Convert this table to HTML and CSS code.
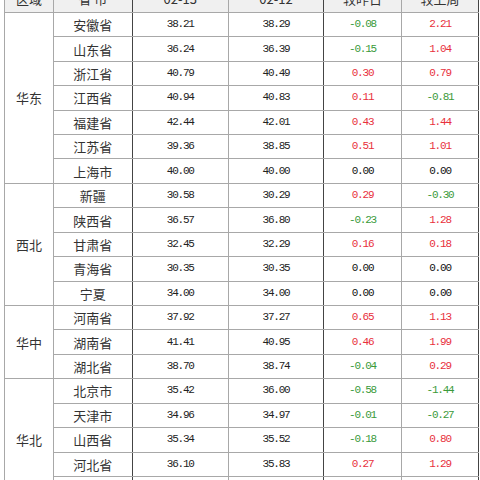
FILE: index.html
```html
<!DOCTYPE html>
<html lang="zh">
<head>
<meta charset="utf-8">
<link rel="stylesheet" href="styles.css">
</head>
<body>
<table class="price">
<colgroup>
<col class="c1"><col class="c2"><col class="c3"><col class="c4"><col class="c5"><col class="c6">
</colgroup>
<thead>
<tr><th>区域</th><th class="dk">省 市</th><th>02-13</th><th class="dk">02-12</th><th>较昨日</th><th class="dk">较上周</th></tr>
</thead>
<tbody>
<tr class="grp"><td class="area" rowspan="7">华东</td><td class="dk">安徽省</td><td class="n">38.21</td><td class="n dk">38.29</td><td class="n g">-0.08</td><td class="n r dk">2.21</td></tr>
<tr><td class="dk">山东省</td><td class="n">36.24</td><td class="n dk">36.39</td><td class="n g">-0.15</td><td class="n r dk">1.04</td></tr>
<tr><td class="dk">浙江省</td><td class="n">40.79</td><td class="n dk">40.49</td><td class="n r">0.30</td><td class="n r dk">0.79</td></tr>
<tr><td class="dk">江西省</td><td class="n">40.94</td><td class="n dk">40.83</td><td class="n r">0.11</td><td class="n g dk">-0.81</td></tr>
<tr><td class="dk">福建省</td><td class="n">42.44</td><td class="n dk">42.01</td><td class="n r">0.43</td><td class="n r dk">1.44</td></tr>
<tr><td class="dk">江苏省</td><td class="n">39.36</td><td class="n dk">38.85</td><td class="n r">0.51</td><td class="n r dk">1.01</td></tr>
<tr><td class="dk">上海市</td><td class="n">40.00</td><td class="n dk">40.00</td><td class="n z">0.00</td><td class="n z dk">0.00</td></tr>
<tr class="grp"><td class="area" rowspan="5">西北</td><td class="dk">新疆</td><td class="n">30.58</td><td class="n dk">30.29</td><td class="n r">0.29</td><td class="n g dk">-0.30</td></tr>
<tr><td class="dk">陕西省</td><td class="n">36.57</td><td class="n dk">36.80</td><td class="n g">-0.23</td><td class="n r dk">1.28</td></tr>
<tr><td class="dk">甘肃省</td><td class="n">32.45</td><td class="n dk">32.29</td><td class="n r">0.16</td><td class="n r dk">0.18</td></tr>
<tr><td class="dk">青海省</td><td class="n">30.35</td><td class="n dk">30.35</td><td class="n z">0.00</td><td class="n z dk">0.00</td></tr>
<tr><td class="dk">宁夏</td><td class="n">34.00</td><td class="n dk">34.00</td><td class="n z">0.00</td><td class="n z dk">0.00</td></tr>
<tr class="grp"><td class="area" rowspan="3">华中</td><td class="dk">河南省</td><td class="n">37.92</td><td class="n dk">37.27</td><td class="n r">0.65</td><td class="n r dk">1.13</td></tr>
<tr><td class="dk">湖南省</td><td class="n">41.41</td><td class="n dk">40.95</td><td class="n r">0.46</td><td class="n r dk">1.99</td></tr>
<tr><td class="dk">湖北省</td><td class="n">38.70</td><td class="n dk">38.74</td><td class="n g">-0.04</td><td class="n r dk">0.29</td></tr>
<tr class="grp"><td class="area" rowspan="5">华北</td><td class="dk">北京市</td><td class="n">35.42</td><td class="n dk">36.00</td><td class="n g">-0.58</td><td class="n g dk">-1.44</td></tr>
<tr><td class="dk">天津市</td><td class="n">34.96</td><td class="n dk">34.97</td><td class="n g">-0.01</td><td class="n g dk">-0.27</td></tr>
<tr><td class="dk">山西省</td><td class="n">35.34</td><td class="n dk">35.52</td><td class="n g">-0.18</td><td class="n r dk">0.80</td></tr>
<tr><td class="dk">河北省</td><td class="n">36.10</td><td class="n dk">35.83</td><td class="n r">0.27</td><td class="n r dk">1.29</td></tr>
<tr><td class="dk">内蒙古</td><td class="n">33.50</td><td class="n dk">33.40</td><td class="n r">0.10</td><td class="n r dk">0.60</td></tr>
</tbody>
</table>
</body>
</html>
```
FILE: styles.css
```css
html, body {
  margin: 0;
  padding: 0;
  background: #ffffff;
}
body {
  overflow: hidden;
  height: 480px;
}
.price {
  border-collapse: collapse;
  table-layout: fixed;
  width: 474px;
  margin: -12.5px 0 0 4px;
  font-family: "Noto Sans CJK SC", "Liberation Sans", sans-serif;
  font-size: 13px;
  color: #333333;
}
.c1 { width: 49px; }
.c2 { width: 78.5px; }
.c3 { width: 96.5px; }
.c4 { width: 95px; }
.c5 { width: 78px; }
.c6 { width: 77px; }
.price th,
.price td {
  height: 24.43px;
  padding: 0;
  text-align: center;
  vertical-align: middle;
  border: 1px solid #a8a8a8;
  line-height: 1;
  box-sizing: border-box;
}
.price th {
  background: #f0f0f0;
  font-weight: normal;
  padding-bottom: 3px;
}
.price .dk {
  border-right-color: #444444;
}
.price .n {
  font-family: "Liberation Mono", "DejaVu Sans Mono", monospace;
  font-size: 11px;
  letter-spacing: -1.2px;
  color: #222222;
}
.price .r { color: #e8303c; }
.price .g { color: #3a9a3a; }
.price .z { color: #111111; }
.price .area {
  font-size: 13px;
}
```
